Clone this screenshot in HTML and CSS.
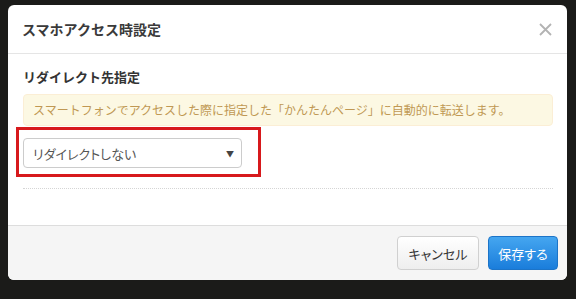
FILE: index.html
```html
<!DOCTYPE html>
<html lang="ja">
<head>
    <meta charset="UTF-8">
    <meta name="viewport" content="width=device-width, initial-scale=1.0">
    <title>スマホアクセス時設定</title>
    <link rel="stylesheet" href="styles.css">
</head>
<body>
    <div class="modal">
        <div class="modal-header">
            <h3>スマホアクセス時設定</h3>
            <div class="close">
                <svg width="13" height="13" viewBox="0 0 13 13"><path d="M1 1L12 12M12 1L1 12" stroke="#b3b3b3" stroke-width="1.8" fill="none"/></svg>
            </div>
        </div>
        <div class="modal-body">
            <div class="field-label">リダイレクト先指定</div>
            <div class="alert">スマートフォンでアクセスした際に指定した「かんたんページ」に自動的に転送します。</div>
            <div class="highlight">
                <div class="select">
                    <span>リダイレクトしない</span>
                    <span class="caret">&#9660;</span>
                </div>
            </div>
            <div class="divider"></div>
        </div>
        <div class="modal-footer">
            <button type="button" class="btn">キャンセル</button>
            <button type="button" class="btn btn-primary">保存する</button>
        </div>
    </div>
</body>
</html>
```

FILE: styles.css
```css
body {
    margin: 0;
    padding: 5px 0 0 8px;
    background-color: #1b1b19;
    font-family: "Noto Sans CJK JP", "Noto Sans", sans-serif;
    color: #333;
    height: 294px;
    overflow: hidden;
}
.modal {
    width: 559px;
    background-color: #fff;
    border-radius: 6px;
    overflow: hidden;
}
.modal-header {
    height: 48px;
    border-bottom: 1px solid #e5e5e5;
    display: flex;
    align-items: center;
    justify-content: space-between;
    padding: 0 15px 0 14px;
}
.modal-header h3 {
    margin: 0;
    font-size: 14px;
    font-weight: 700;
    color: #3a3a3a;
}
.close {
    display: flex;
    margin-top: 1px;
}
.modal-body {
    height: 171px;
    box-sizing: border-box;
    padding: 14px 14px 0 15px;
}
.field-label {
    font-size: 13px;
    font-weight: 700;
    line-height: 18px;
    margin-bottom: 8px;
}
.alert {
    background-color: #fcf8e3;
    border: 1px solid #fbeed5;
    border-radius: 4px;
    color: #c09853;
    font-size: 12px;
    line-height: 14px;
    padding: 8px 9px;
    margin-bottom: 1px;
    white-space: nowrap;
}
.highlight {
    width: 235px;
    margin-left: -7px;
    border: 3px solid #d7191c;
    padding: 8px 0 6px 4px;
}
.select {
    width: 219px;
    height: 30px;
    box-sizing: border-box;
    border: 1px solid #ccc;
    border-radius: 4px;
    display: flex;
    align-items: center;
    justify-content: space-between;
    padding: 0 7px 0 9px;
    font-size: 13px;
    font-feature-settings: "palt";
    color: #555;
}
.caret {
    font-size: 8px;
    color: #444;
}
.divider {
    margin-top: 11px;
    border-top: 1px dotted #d5d5d5;
}
.modal-footer {
    height: 55px;
    box-sizing: border-box;
    background-color: #f5f5f5;
    border-top: 1px solid #ddd;
    display: flex;
    align-items: center;
    justify-content: flex-end;
    gap: 9px;
    padding: 0 9px 0 0;
}
.btn {
    height: 34px;
    padding: 0;
    font-family: inherit;
    font-size: 13px;
    font-feature-settings: "palt";
    white-space: nowrap;
    color: #333;
    background: linear-gradient(#ffffff, #eeeeee);
    border: 1px solid #d0d0d0;
    border-radius: 4px;
    cursor: pointer;
}
.btn:first-child {
    width: 82px;
}
.btn-primary {
    width: 70px;
    color: #fff;
    background: linear-gradient(#45a6f0, #1a7ddb);
    border-color: #1c74c8;
}
```
